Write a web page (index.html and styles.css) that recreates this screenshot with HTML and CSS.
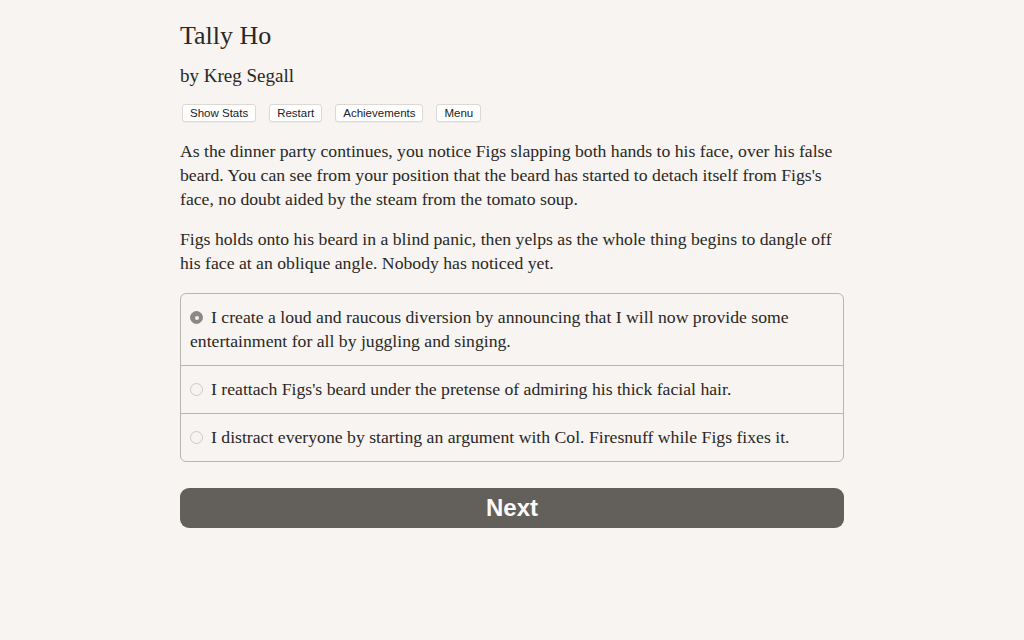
FILE: index.html
```html
<!DOCTYPE html>
<html>
<head>
<meta charset="utf-8">
<link rel="stylesheet" href="styles.css">
</head>
<body>
<div class="container">
  <h1 class="title">Tally Ho</h1>
  <h2 class="author">by Kreg Segall</h2>
  <div class="buttons">
    <button class="btn">Show Stats</button>
    <button class="btn">Restart</button>
    <button class="btn">Achievements</button>
    <button class="btn">Menu</button>
  </div>
  <p class="para">As the dinner party continues, you notice Figs slapping both hands to his face, over his false beard. You can see from your position that the beard has started to detach itself from Figs's face, no doubt aided by the steam from the tomato soup.</p>
  <p class="para">Figs holds onto his beard in a blind panic, then yelps as the whole thing begins to dangle off his face at an oblique angle. Nobody has noticed yet.</p>
  <div class="choices">
    <div class="choice"><span class="radio checked"></span>I create a loud and raucous diversion by announcing that I will now provide some entertainment for all by juggling and singing.</div>
    <div class="choice"><span class="radio"></span>I reattach Figs's beard under the pretense of admiring his thick facial hair.</div>
    <div class="choice"><span class="radio"></span>I distract everyone by starting an argument with Col. Firesnuff while Figs fixes it.</div>
  </div>
  <button class="next">Next</button>
</div>
</body>
</html>
```
FILE: styles.css
```css
html, body {
  margin: 0;
  padding: 0;
  background: #f7f4f1;
}
body {
  font-family: "Liberation Serif", "DejaVu Serif", serif;
  color: #2a2826;
}
.container {
  width: 664px;
  margin: 0 auto;
  padding-top: 20px;
  box-sizing: border-box;
}
.title {
  font-weight: normal;
  font-size: 26px;
  line-height: 32px;
  margin: 0 0 12px 0;
}
.author {
  font-weight: normal;
  font-size: 19px;
  line-height: 24px;
  margin: 0 0 16px 0;
}
.buttons {
  display: flex;
  gap: 13px;
  margin-left: 2px;
  margin-bottom: 17px;
}
.btn {
  font-family: "Liberation Sans", sans-serif;
  font-size: 11.5px;
  background: #ffffff;
  border: 1px solid #dcd9d5;
  border-radius: 3px;
  padding: 1px 7px 2px;
  height: 18px;
  color: #222;
  box-shadow: 0 1px 1px rgba(0,0,0,0.04);
}
.para {
  font-size: 17.7px;
  line-height: 24px;
  margin: 0 0 16px 0;
}
.choices {
  border: 1px solid #b9b6b2;
  border-radius: 6px;
  margin-top: 18px;
}
.choice {
  font-size: 17.7px;
  line-height: 24px;
  padding: 11px 8px 12px 9px;
  border-top: 1px solid #b9b6b2;
}
.choice:first-child {
  border-top: none;
}
.radio {
  display: inline-block;
  width: 13px;
  height: 13px;
  border-radius: 50%;
  border: 1px solid #cdcac6;
  background: #f6f4f1;
  box-sizing: border-box;
  margin-right: 8px;
  vertical-align: -1px;
  position: relative;
}
.radio.checked {
  background: #8b8885;
  border-color: #8b8885;
}
.radio.checked::after {
  content: "";
  position: absolute;
  left: 3.5px;
  top: 3.5px;
  width: 4px;
  height: 4px;
  border-radius: 50%;
  background: #f0eeeb;
}
.next {
  display: block;
  width: 100%;
  height: 40px;
  margin-top: 26px;
  background: #63605c;
  border: none;
  border-radius: 9px;
  color: #fbfaf8;
  font-family: "Liberation Sans", sans-serif;
  font-weight: bold;
  font-size: 24px;
}
```
